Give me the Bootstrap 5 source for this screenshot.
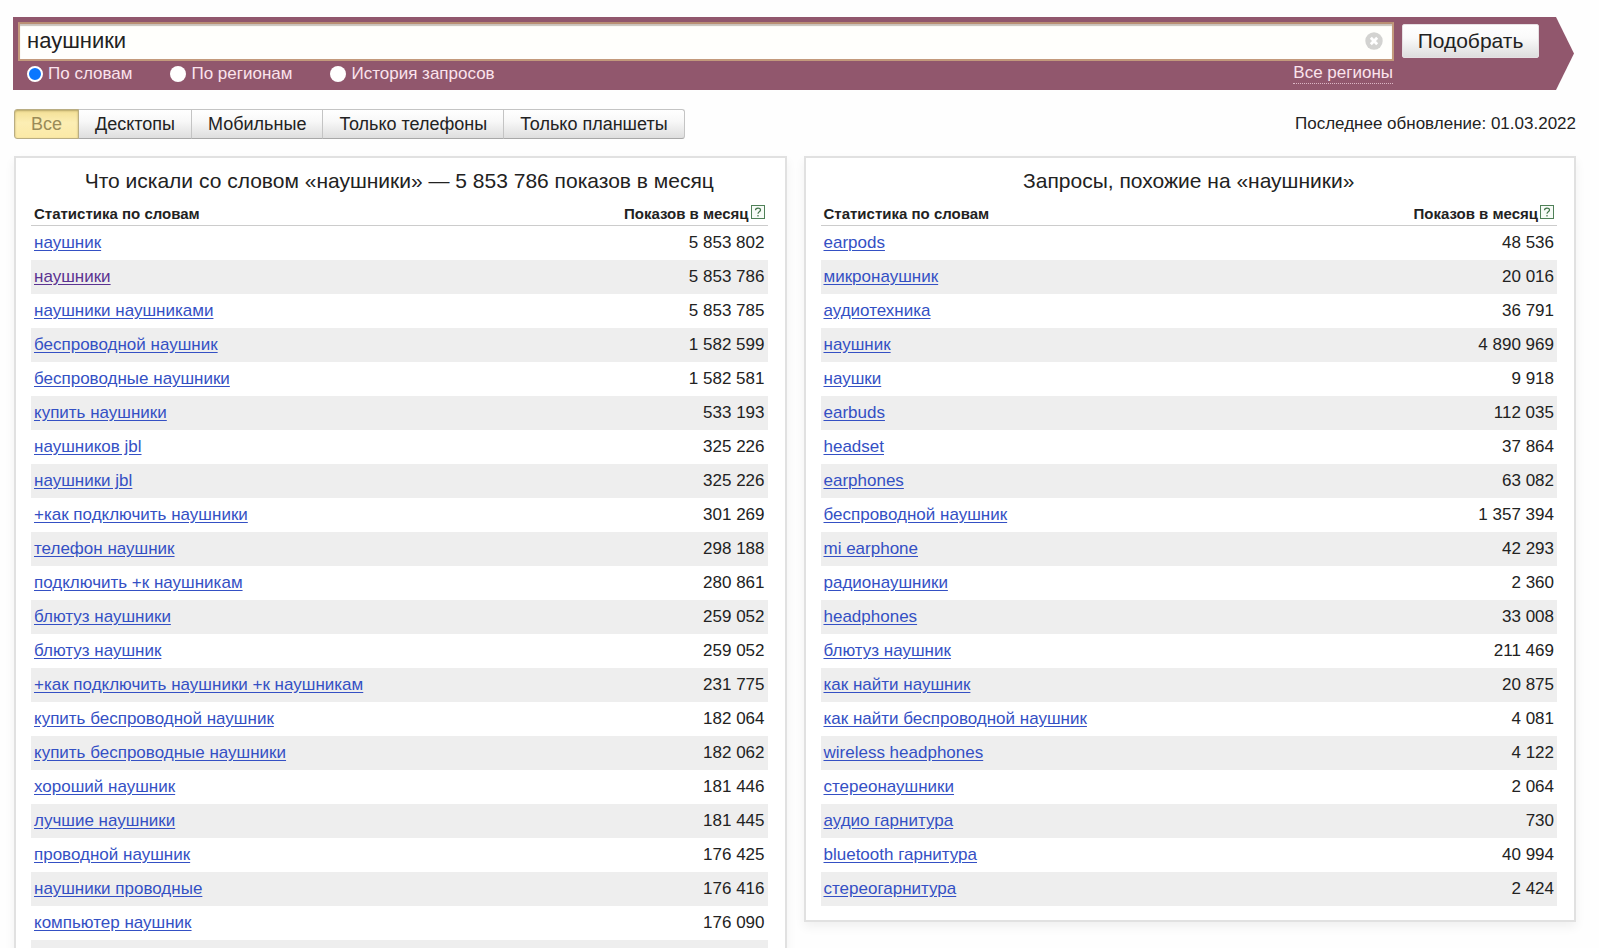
<!DOCTYPE html>
<html lang="ru">
<head>
<meta charset="utf-8">
<meta name="viewport" content="width=device-width, initial-scale=1">
<title>Подбор слов: наушники</title>
<link href="https://cdn.jsdelivr.net/npm/bootstrap@5.3.0/dist/css/bootstrap.min.css" rel="stylesheet">
<style>
  body { font-family: "Liberation Sans", Arial, sans-serif; font-size: 17px; line-height: 24px; color: #222; background: #fefefe; }
  .page-wrap { padding: 17px 23px 0 14px; }
  /* Search strip ending in an arrow */
  .search-strip { margin: 0 2px 0 -1px; padding: 5px 35px 0 5px; height: 73px; background: #91576d; gap: 8px;
    clip-path: polygon(0 0, calc(100% - 18px) 0, 100% 50%, calc(100% - 18px) 100%, 0 100%); }
  .query-input { height: 39px; padding: 0 40px 2px 7px; font-size: 22px; line-height: 24px; color: #222; background: #fffffc;
    border: 2px solid #c39a7c; border-top-color: #b98f74; border-radius: 0; box-shadow: inset 0 2px 1px #c9c2bb; }
  .query-input:focus { box-shadow: inset 0 2px 1px #c9c2bb; border-color: #c39a7c; }
  .clear-btn { position: absolute; right: 11px; top: 10px; width: 18px; height: 18px; }
  .submit-btn { width: 137px; height: 34px; margin-top: 2px; padding: 0; font-size: 21px; line-height: 24px; color: #222;
    border: 1px solid #e6e0e3; border-radius: 2px; background: linear-gradient(#fff, #fafafa 40%, #dedede); }
  .mode-row { color: #fbe3ec; line-height: 24px; padding: 1px 1px 0 9px; }
  .mode-list { gap: 38px; }
  .mode-list label { gap: 5px; }
  .mode-list input { width: 16px; height: 16px; margin: 0; appearance: none; border-radius: 50%; background: #fff; }
  .mode-list input:checked { background: #0a77ff; border: 2px solid #fff; box-shadow: inset 0 0 0 1px #0a77ff; }
  .region-link, .region-link:hover { color: #fbe3ec; text-decoration: none; line-height: 21px; border-bottom: 1px dotted #dcb7c5; }
  /* Device switch */
  .device-row { margin-top: 19px; }
  .device-tabs .btn { height: 30px; padding: 0 16px; font-size: 18px; line-height: 26px; color: #222; border: 1px solid #c4c4c4;
    border-bottom-color: #a8a8a8; border-radius: 3px; background: linear-gradient(#fff, #f8f8f8 40%, #dedede); }
  .device-tabs .btn.active { color: #9a8b58; background: linear-gradient(#f3df94, #fceeb4 45%, #fbe9a6); border-color: #b9ad83;
    box-shadow: inset 0 1px 2px #b5a467; line-height: 28px; }
  /* Result panels */
  .panel-grid { display: grid; grid-template-columns: 1fr 1fr; gap: 17px; margin-top: 17px; align-items: start; }
  .stat-panel { padding: 8px 17px 14px 15px; border: 2px solid #e1e1e1; background: #fff; box-shadow: 0 5px 10px rgba(0,0,0,.06); }
  .stat-panel h2 { font-size: 21px; line-height: 30px; font-weight: 400; text-align: center; margin: 0; }
  .stat-table { width: 100%; border-collapse: separate; border-spacing: 0; }
  .stat-table th { font-size: 15px; line-height: 18px; padding: 9px 3px 2px; border-bottom: 1px solid #ccc; }
  .stat-table td { height: 34px; padding: 5px 3px; line-height: 24px; }
  .stat-table tr > :last-child { text-align: right; white-space: nowrap; }
  .stat-table tbody tr:nth-child(even) { background: #eee; }
  .stat-table a { color: #3450c4; text-underline-offset: 2px; }
  .stat-table a.seen { color: #5b3391; }
  .help-link { display: inline-block; vertical-align: top; margin-left: 2px; }
  .help-link svg { display: block; }
</style>
</head>
<body class="vh-100 overflow-hidden">
<svg class="d-none" aria-hidden="true">
  <symbol id="help" viewBox="0 0 14 14"><rect x=".5" y=".5" width="13" height="13" fill="#f7fbf7" stroke="#4f8058"/><path d="M4.5 5.3C4.5 2.4 9.5 2.4 9.5 5.1C9.5 6.9 7 6.7 7 8.7M7 10v1.4" fill="none" stroke="#417349" stroke-width="1.2"/></symbol>
</svg>
<div class="page-wrap">
  <form class="search-strip d-flex align-items-start" onsubmit="return false">
    <div class="flex-grow-1">
      <div class="position-relative">
        <input class="form-control query-input" type="text" value="наушники" aria-label="Запрос">
        <button class="clear-btn btn p-0 border-0 d-flex" type="button" aria-label="Очистить">
          <svg width="18" height="18" viewBox="0 0 18 18"><circle cx="9" cy="9" r="8.7" fill="#d3d3d1"/><path d="M5.8 5.8l6.4 6.4M12.2 5.8l-6.4 6.4" stroke="#fff" stroke-width="2.8"/></svg>
        </button>
      </div>
      <div class="mode-row d-flex justify-content-between align-items-start">
        <div class="mode-list d-flex">
          <label class="d-flex align-items-center"><input type="radio" name="mode" checked>По словам</label>
          <label class="d-flex align-items-center"><input type="radio" name="mode">По регионам</label>
          <label class="d-flex align-items-center"><input type="radio" name="mode">История запросов</label>
        </div>
        <a class="region-link" href="#">Все регионы</a>
      </div>
    </div>
    <button class="btn submit-btn" type="submit">Подобрать</button>
  </form>

  <div class="device-row d-flex justify-content-between align-items-center">
    <div class="btn-group device-tabs" role="group" aria-label="Устройства">
      <button type="button" class="btn active">Все</button>
      <button type="button" class="btn">Десктопы</button>
      <button type="button" class="btn">Мобильные</button>
      <button type="button" class="btn">Только телефоны</button>
      <button type="button" class="btn">Только планшеты</button>
    </div>
    <div>Последнее обновление: 01.03.2022</div>
  </div>

  <div class="panel-grid">
    <section class="stat-panel">
      <h2>Что искали со словом «наушники» — 5 853 786 показов в месяц</h2>
      <table class="stat-table">
        <thead><tr><th>Статистика по словам</th><th>Показов в месяц<a class="help-link" href="#" aria-label="Справка"><svg width="14" height="14"><use href="#help"/></svg></a></th></tr></thead>
        <tbody>
          <tr><td><a href="#">наушник</a></td><td>5 853 802</td></tr>
          <tr><td><a href="#" class="seen">наушники</a></td><td>5 853 786</td></tr>
          <tr><td><a href="#">наушники наушниками</a></td><td>5 853 785</td></tr>
          <tr><td><a href="#">беспроводной наушник</a></td><td>1 582 599</td></tr>
          <tr><td><a href="#">беспроводные наушники</a></td><td>1 582 581</td></tr>
          <tr><td><a href="#">купить наушники</a></td><td>533 193</td></tr>
          <tr><td><a href="#">наушников jbl</a></td><td>325 226</td></tr>
          <tr><td><a href="#">наушники jbl</a></td><td>325 226</td></tr>
          <tr><td><a href="#">+как подключить наушники</a></td><td>301 269</td></tr>
          <tr><td><a href="#">телефон наушник</a></td><td>298 188</td></tr>
          <tr><td><a href="#">подключить +к наушникам</a></td><td>280 861</td></tr>
          <tr><td><a href="#">блютуз наушники</a></td><td>259 052</td></tr>
          <tr><td><a href="#">блютуз наушник</a></td><td>259 052</td></tr>
          <tr><td><a href="#">+как подключить наушники +к наушникам</a></td><td>231 775</td></tr>
          <tr><td><a href="#">купить беспроводной наушник</a></td><td>182 064</td></tr>
          <tr><td><a href="#">купить беспроводные наушники</a></td><td>182 062</td></tr>
          <tr><td><a href="#">хороший наушник</a></td><td>181 446</td></tr>
          <tr><td><a href="#">лучшие наушники</a></td><td>181 445</td></tr>
          <tr><td><a href="#">проводной наушник</a></td><td>176 425</td></tr>
          <tr><td><a href="#">наушники проводные</a></td><td>176 416</td></tr>
          <tr><td><a href="#">компьютер наушник</a></td><td>176 090</td></tr>
          <tr><td></td><td></td></tr>
        </tbody>
      </table>
    </section>

    <section class="stat-panel">
      <h2>Запросы, похожие на «наушники»</h2>
      <table class="stat-table">
        <thead><tr><th>Статистика по словам</th><th>Показов в месяц<a class="help-link" href="#" aria-label="Справка"><svg width="14" height="14"><use href="#help"/></svg></a></th></tr></thead>
        <tbody>
          <tr><td><a href="#">earpods</a></td><td>48 536</td></tr>
          <tr><td><a href="#">микронаушник</a></td><td>20 016</td></tr>
          <tr><td><a href="#">аудиотехника</a></td><td>36 791</td></tr>
          <tr><td><a href="#">наушник</a></td><td>4 890 969</td></tr>
          <tr><td><a href="#">наушки</a></td><td>9 918</td></tr>
          <tr><td><a href="#">earbuds</a></td><td>112 035</td></tr>
          <tr><td><a href="#">headset</a></td><td>37 864</td></tr>
          <tr><td><a href="#">earphones</a></td><td>63 082</td></tr>
          <tr><td><a href="#">беспроводной наушник</a></td><td>1 357 394</td></tr>
          <tr><td><a href="#">mi earphone</a></td><td>42 293</td></tr>
          <tr><td><a href="#">радионаушники</a></td><td>2 360</td></tr>
          <tr><td><a href="#">headphones</a></td><td>33 008</td></tr>
          <tr><td><a href="#">блютуз наушник</a></td><td>211 469</td></tr>
          <tr><td><a href="#">как найти наушник</a></td><td>20 875</td></tr>
          <tr><td><a href="#">как найти беспроводной наушник</a></td><td>4 081</td></tr>
          <tr><td><a href="#">wireless headphones</a></td><td>4 122</td></tr>
          <tr><td><a href="#">стереонаушники</a></td><td>2 064</td></tr>
          <tr><td><a href="#">аудио гарнитура</a></td><td>730</td></tr>
          <tr><td><a href="#">bluetooth гарнитура</a></td><td>40 994</td></tr>
          <tr><td><a href="#">стереогарнитура</a></td><td>2 424</td></tr>
        </tbody>
      </table>
    </section>
  </div>
</div>
<script src="https://cdn.jsdelivr.net/npm/bootstrap@5.3.0/dist/js/bootstrap.bundle.min.js"></script>
</body>
</html>
